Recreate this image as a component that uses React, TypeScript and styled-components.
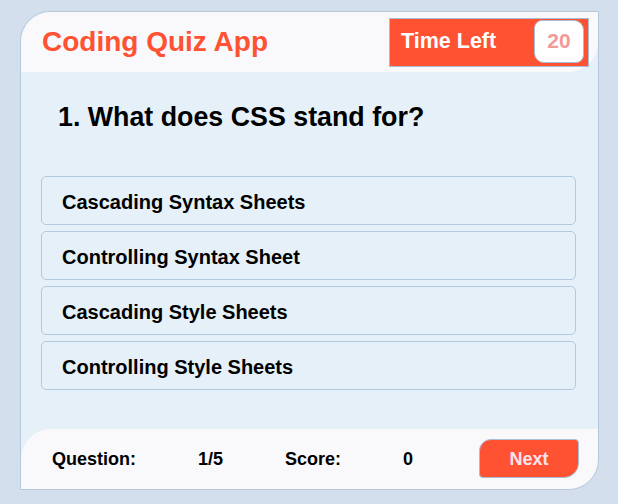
import React from "react";
import styled, { createGlobalStyle } from "styled-components";

const GlobalStyle = createGlobalStyle`
  html, body {
    margin: 0;
    padding: 0;
    background: #d3dfec;
    font-family: "Liberation Sans", Arial, sans-serif;
  }
  * { box-sizing: border-box; }
`;

const Page = styled.div`
  width: 618px;
  height: 504px;
  padding: 11px 0 0 20px;
`;

const Card = styled.div`
  width: 579px;
  background: #e5f0f9;
  border: 1px solid #b5c8dc;
  border-radius: 30px 0 30px 0;
  overflow: hidden;
`;

const Header = styled.header`
  height: 60px;
  display: flex;
  align-items: center;
  justify-content: space-between;
  padding: 0 9px 0 21px;
  background: #f9f9fc;
  border-radius: 30px 0 30px 0;
`;

const Title = styled.h1`
  margin: 0;
  font-size: 28px;
  font-weight: 700;
  color: #ff5233;
`;

const Timer = styled.div`
  width: 200px;
  height: 49px;
  display: flex;
  align-items: center;
  justify-content: space-between;
  padding: 0 4px 2px 11px;
  background: #ff5233;
  border: 1px solid #a9bdd4;
`;

const TimerLabel = styled.span`
  color: #ffffff;
  font-size: 21.5px;
  font-weight: 700;
`;

const TimerValue = styled.span`
  width: 50px;
  height: 43px;
  display: flex;
  align-items: center;
  justify-content: center;
  background: #ffffff;
  border: 1px solid #a9bdd4;
  border-radius: 8px 10px 8px 10px;
  color: #f29a9a;
  font-size: 21px;
  font-weight: 700;
`;

const Body = styled.section`
  padding: 30px 22px 39px 20px;
`;

const Question = styled.h2`
  margin: 0 0 43px 17px;
  font-size: 26.8px;
  line-height: 31px;
  font-weight: 700;
  color: #000;
`;

const Options = styled.ul`
  list-style: none;
  margin: 0;
  padding: 0;
  display: flex;
  flex-direction: column;
  gap: 6px;
`;

const Option = styled.li`
  height: 49px;
  display: flex;
  align-items: center;
  padding: 3px 20px 0;
  background: #e5f0f9;
  border: 1px solid #b3c9df;
  border-radius: 5px;
  font-size: 20px;
  font-weight: 700;
  color: #000;
`;

const Footer = styled.footer`
  height: 60px;
  display: flex;
  align-items: center;
  padding: 0 19px 0 31px;
  background: #f9f9fc;
  border-radius: 30px 0 30px 0;
`;

const Stats = styled.div`
  display: flex;
  gap: 62px;
  flex: 1;
`;

const Stat = styled.span`
  font-size: 18px;
  font-weight: 700;
  color: #000;
`;

const NextButton = styled.button`
  width: 100px;
  height: 39px;
  margin-bottom: 1px;
  padding: 2px 0 0;
  background: #ff5233;
  border: 1px solid #a9bdd4;
  border-radius: 12px 4px 15px 4px;
  color: #f8e4ee;
  font-family: "Liberation Sans", Arial, sans-serif;
  font-size: 18px;
  font-weight: 700;
  cursor: pointer;
`;

const options = [
  "Cascading Syntax Sheets",
  "Controlling Syntax Sheet",
  "Cascading Style Sheets",
  "Controlling Style Sheets",
];

export default function App() {
  return (
    <>
      <GlobalStyle />
      <Page>
        <Card>
          <Header>
            <Title>Coding Quiz App</Title>
            <Timer>
              <TimerLabel>Time Left</TimerLabel>
              <TimerValue>20</TimerValue>
            </Timer>
          </Header>
          <Body>
            <Question>1. What does CSS stand for?</Question>
            <Options>
              {options.map((o) => (
                <Option key={o}>{o}</Option>
              ))}
            </Options>
          </Body>
          <Footer>
            <Stats>
              <Stat>Question:</Stat>
              <Stat>1/5</Stat>
              <Stat>Score:</Stat>
              <Stat>0</Stat>
            </Stats>
            <NextButton>Next</NextButton>
          </Footer>
        </Card>
      </Page>
    </>
  );
}
